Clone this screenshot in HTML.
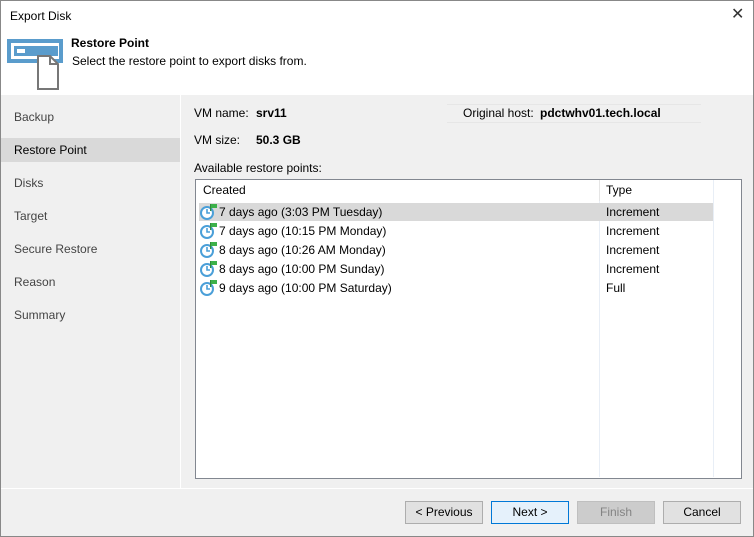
<!DOCTYPE html>
<html><head><style>
body{margin:0;width:754px;height:537px;overflow:hidden;font-family:"Liberation Sans",sans-serif;font-size:12px;color:#000;background:#f0f0f0;position:relative}
.win{position:absolute;left:0;top:0;width:752px;height:535px;border:1px solid #888;background:#f0f0f0}
.abs{position:absolute;white-space:nowrap}
.nav{position:absolute;left:0;width:179px;height:24px;line-height:24px;padding-left:13px;box-sizing:border-box;color:#444}
.btn{position:absolute;top:500px;width:76px;height:21px;border:1px solid #adadad;background:#e1e1e1;text-align:center;line-height:21px}
.ic{position:absolute;left:198px}
</style></head><body>
<div class="win">
<div class="abs" style="left:0;top:0;width:752px;height:94px;background:#fff"></div>
<div class="abs" style="left:9px;top:8px">Export Disk</div>
<div class="abs" style="left:730px;top:3px;font-size:16px;color:#333">✕</div>
<svg class="abs" style="left:4px;top:36px" width="60" height="54">
<rect x="2" y="2" width="56" height="24" fill="#5a9ccc"/>
<rect x="6" y="6" width="48" height="16" fill="#fff"/>
<rect x="9" y="9" width="44" height="10" fill="#5a9ccc"/>
<rect x="12" y="12" width="8" height="4" fill="#fff"/>
<path d="M33 19h12l8 8v25h-20z" fill="#fff" stroke="#777" stroke-width="2"/>
<path d="M45 19v8h8" fill="none" stroke="#777" stroke-width="2"/>
</svg>
<div class="abs" style="left:70px;top:35px;font-weight:bold">Restore Point</div>
<div class="abs" style="left:71px;top:53px">Select the restore point to export disks from.</div>
<div class="abs" style="left:0;top:94px;width:179px;height:393px;background:#f0f0f0;border-right:1px solid #fff"></div>
<div class="nav" style="top:104px">Backup</div>
<div class="nav" style="top:137px;background:#d9d9d9;color:#000">Restore Point</div>
<div class="nav" style="top:170px">Disks</div>
<div class="nav" style="top:203px">Target</div>
<div class="nav" style="top:236px">Secure Restore</div>
<div class="nav" style="top:269px">Reason</div>
<div class="nav" style="top:302px">Summary</div>
<div class="abs" style="left:193px;top:105px">VM name:</div>
<div class="abs" style="left:255px;top:105px;font-weight:bold">srv11</div>
<div class="abs" style="left:193px;top:132px">VM size:</div>
<div class="abs" style="left:255px;top:132px;font-weight:bold">50.3 GB</div>
<div class="abs" style="left:446px;top:103px;width:254px;height:17px;border-top:1px solid #e6e6e6;border-bottom:1px solid #e6e6e6"></div>
<div class="abs" style="left:462px;top:105px">Original host:</div>
<div class="abs" style="left:539px;top:105px;font-weight:bold">pdctwhv01.tech.local</div>
<div class="abs" style="left:193px;top:160px">Available restore points:</div>
<div class="abs" style="left:194px;top:178px;width:545px;height:298px;border:1px solid #828790;background:#fff"></div>
<div class="abs" style="left:598px;top:179px;width:1px;height:297px;background:#e8eef6"></div>
<div class="abs" style="left:712px;top:179px;width:1px;height:297px;background:#e8eef6"></div>
<div class="abs" style="left:202px;top:182px">Created</div>
<div class="abs" style="left:605px;top:182px">Type</div>
<div class="abs" style="left:598px;top:179px;width:1px;height:21px;background:#e5e5e5"></div>
<div class="abs" style="left:198px;top:202px;width:514px;height:18px;background:#d9d9d9"></div>

<svg width="0" height="0" style="position:absolute"><defs><g id="clk"><circle cx="8" cy="10" r="6" fill="#fff" stroke="#4a9fd8" stroke-width="2"/><path d="M8 6v4h3" fill="none" stroke="#4a9fd8" stroke-width="1.6"/><rect x="11" y="1" width="1.3" height="7" fill="#2f8a3a"/><path d="M12 1h6v4h-6z" fill="#3cb14a"/></g></defs></svg>

<svg class="ic" style="top:202px" width="20" height="18"><use href="#clk"/></svg>
<div class="abs" style="left:218px;top:204px">7 days ago (3:03 PM Tuesday)</div>
<div class="abs" style="left:605px;top:204px">Increment</div>
<svg class="ic" style="top:221px" width="20" height="18"><use href="#clk"/></svg>
<div class="abs" style="left:218px;top:223px">7 days ago (10:15 PM Monday)</div>
<div class="abs" style="left:605px;top:223px">Increment</div>
<svg class="ic" style="top:240px" width="20" height="18"><use href="#clk"/></svg>
<div class="abs" style="left:218px;top:242px">8 days ago (10:26 AM Monday)</div>
<div class="abs" style="left:605px;top:242px">Increment</div>
<svg class="ic" style="top:259px" width="20" height="18"><use href="#clk"/></svg>
<div class="abs" style="left:218px;top:261px">8 days ago (10:00 PM Sunday)</div>
<div class="abs" style="left:605px;top:261px">Increment</div>
<svg class="ic" style="top:278px" width="20" height="18"><use href="#clk"/></svg>
<div class="abs" style="left:218px;top:280px">9 days ago (10:00 PM Saturday)</div>
<div class="abs" style="left:605px;top:280px">Full</div>

<div class="abs" style="left:0;top:487px;width:752px;height:1px;background:#fff"></div>
<div class="btn" style="left:404px">&lt; Previous</div>
<div class="btn" style="left:490px;border-color:#0078d7;background:#e5f1fb">Next &gt;</div>
<div class="btn" style="left:576px;background:#cccccc;border-color:#bfbfbf;color:#838383">Finish</div>
<div class="btn" style="left:662px">Cancel</div>
</div>
</body></html>
